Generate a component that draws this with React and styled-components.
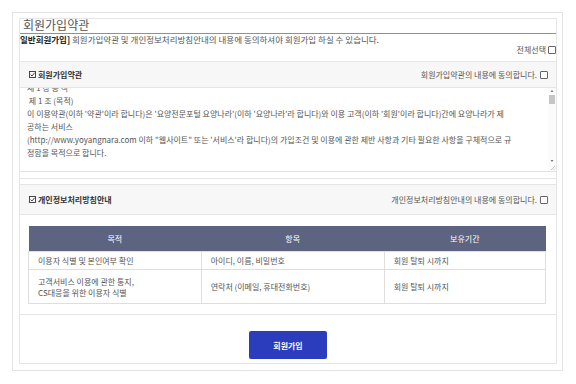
import React from "react";
import styled, { createGlobalStyle } from "styled-components";

const GlobalStyle = createGlobalStyle`
  html, body {
    margin: 0;
    padding: 0;
    background: #fff;
  }
  body {
    font-family: "Noto Sans CJK KR", "Noto Sans", sans-serif;
    color: #555;
  }
`;

const Page = styled.div`
  width: 576px;
  height: 384px;
  padding: 12px;
  box-sizing: border-box;
`;

const Card = styled.div`
  position: relative;
  width: 551px;
  height: 359px;
  box-sizing: border-box;
  border: 1px solid #e3e3e3;
  background: #fff;
  padding: 5px 5px 6px 6px;

  &::before {
    content: "";
    position: absolute;
    z-index: -1;
    left: 3px;
    bottom: 7px;
    width: 45%;
    height: 45%;
    box-shadow: -5px 9px 10px rgba(0, 0, 0, 0.3);
    transform: rotate(-2deg);
  }
`;

const Inner = styled.div`
  width: 538px;
  height: 346px;
  box-sizing: border-box;
  border: 1px solid #e6e6e6;
  display: flex;
  flex-direction: column;
`;

const Title = styled.h2`
  margin: 0;
  height: 14px;
  line-height: 12px;
  padding: 0 3px;
  font-size: 12px;
  font-weight: 400;
  color: #555;
  border-bottom: 1px solid #d46a9f;
`;

const Intro = styled.p`
  margin: 0;
  font-size: 8.5px;
  line-height: 11px;
  color: #555;
  white-space: nowrap;

  b {
    color: #222;
  }
`;

const SelectAll = styled.div`
  display: flex;
  justify-content: flex-end;
  align-items: center;
  font-size: 8px;
  line-height: 10px;
  color: #555;
  margin-bottom: 6px;
`;

const Box = styled.span`
  display: inline-block;
  width: 6px;
  height: 6px;
  border: 1px solid #666;
  border-radius: 1px;
  margin-left: ${(p) => p.$gap || 2}px;
  background: #fff;
`;

const Section = styled.div`
  border-top: 1px solid #e6e6e6;
  border-bottom: 1px solid #e6e6e6;
  padding-bottom: ${(p) => p.$pb || 0}px;
  margin-bottom: ${(p) => p.$mb || 0}px;
`;

const SectionHead = styled.div`
  height: ${(p) => p.$h || 25}px;
  background: #f7f7f7;
  border-bottom: 1px solid #e6e6e6;
  display: flex;
  align-items: center;
  justify-content: space-between;
  padding: 0 8px 0 9px;
`;

const HeadTitle = styled.span`
  display: flex;
  align-items: center;
  gap: 2px;
  font-size: 8px;
  font-weight: 700;
  color: #333;
`;

const Agree = styled.span`
  display: flex;
  align-items: center;
  font-size: 8px;
  color: #555;
`;

const TextArea = styled.div`
  height: 83px;
  display: flex;
  border-bottom: 1px solid #e3e3e3;
`;

const TextClip = styled.div`
  flex: 1;
  height: 76px;
  overflow: hidden;
  padding: 0 7px;
`;

const TextLines = styled.div`
  margin-top: -7px;
  font-size: 8px;
  line-height: 13px;
  color: #555;
  white-space: pre;
`;

const Scroll = styled.div`
  width: 8px;
  display: flex;
  flex-direction: column;
  align-items: center;
  background: #fbfbfb;
`;

const Thumb = styled.div`
  width: 6px;
  height: 9px;
  background: #c6c6c6;
  margin-top: 1px;
`;

const Spacer = styled.div`
  flex: 1;
`;

const TableWrap = styled.div`
  padding: 11px 10px 10px 8px;
`;

const Table = styled.table`
  width: 100%;
  table-layout: fixed;
  border-collapse: collapse;
  font-size: 8px;
  color: #555;

  th {
    background: #5d6481;
    color: #fff;
    font-weight: 400;
    height: 23px;
  }

  td {
    border: 1px solid #dedede;
    padding: 0 9px;
    line-height: 11px;
  }
`;

const Col = styled.col`
  width: ${(p) => p.$w}%;
`;

const Row = styled.tr`
  height: ${(p) => p.$h}px;
`;

const ButtonArea = styled.div`
  flex: 1;
  display: flex;
  justify-content: center;
  padding-top: 16px;
`;

const JoinButton = styled.button`
  width: 78px;
  height: 28px;
  border: none;
  border-radius: 2px;
  background: #2b3dbd;
  color: #fff;
  font-family: inherit;
  font-size: 8px;
  font-weight: 700;
  cursor: pointer;
`;

const CheckIcon = () => (
  <svg width="7" height="7" viewBox="0 0 7 7">
    <rect x="0.5" y="0.5" width="6" height="6" fill="none" stroke="#333" strokeWidth="0.9" />
    <path d="M1.6 3.6 L3 5 L5.6 1.8" fill="none" stroke="#333" strokeWidth="0.9" />
  </svg>
);

const Arrow = ({ up }) => (
  <svg width="6" height="6" viewBox="0 0 6 6">
    <path d={up ? "M1.5 4 L3 2 L4.5 4 Z" : "M1.5 2 L3 4 L4.5 2 Z"} fill="#777" />
  </svg>
);

const Grip = () => (
  <svg width="7" height="7" viewBox="0 0 7 7">
    <path d="M6 2 L2 6 M6 4.5 L4.5 6" stroke="#aaa" strokeWidth="0.7" />
  </svg>
);

const terms = [
  "제 1 장 총 칙",
  " 제 1 조 (목적)",
  "이 이용약관(이하 '약관'이라 합니다)은 '요양전문포털 요양나라'(이하 '요양나라'라 합니다)와 이용 고객(이하 '회원'이라 합니다)간에 요양나라가 제",
  "공하는 서비스",
  "(http://www.yoyangnara.com 이하 \"웹사이트\" 또는 '서비스'라 합니다)의 가입조건 및 이용에 관한 제반 사항과 기타 필요한 사항을 구체적으로 규",
  "정함을 목적으로 합니다.",
  "",
  " 제 2 조 (정의)",
];

const privacyRows = [
  { purpose: ["이용자 식별 및 본인여부 확인"], items: "아이디, 이름, 비밀번호", period: "회원 탈퇴 시까지", h: 18 },
  {
    purpose: ["고객서비스 이용에 관한 통지,", "CS대응을 위한 이용자 식별"],
    items: "연락처 (이메일, 휴대전화번호)",
    period: "회원 탈퇴 시까지",
    h: 34,
  },
];

export default function App() {
  return (
    <Page>
      <GlobalStyle />
      <Card>
        <Inner>
          <Title>회원가입약관</Title>
          <Intro>
            <b>일반회원가입]</b> 회원가입약관 및 개인정보처리방침안내의 내용에 동의하셔야 회원가입 하실 수 있습니다.
          </Intro>
          <SelectAll>
            전체선택
            <Box />
          </SelectAll>

          <Section $pb={6} $mb={5}>
            <SectionHead>
              <HeadTitle>
                <CheckIcon />
                회원가입약관
              </HeadTitle>
              <Agree>
                회원가입약관의 내용에 동의합니다.
                <Box $gap={3} />
              </Agree>
            </SectionHead>
            <TextArea>
              <TextClip>
                <TextLines>{terms.join("\n")}</TextLines>
              </TextClip>
              <Scroll>
                <Arrow up />
                <Thumb />
                <Spacer />
                <Arrow />
                <Grip />
              </Scroll>
            </TextArea>
          </Section>

          <Section>
            <SectionHead $h={29}>
              <HeadTitle>
                <CheckIcon />
                개인정보처리방침안내
              </HeadTitle>
              <Agree>
                개인정보처리방침안내의 내용에 동의합니다.
                <Box $gap={3} />
              </Agree>
            </SectionHead>
            <TableWrap>
              <Table>
                <colgroup>
                  <Col $w={33.4} />
                  <Col $w={35.4} />
                  <Col $w={31.2} />
                </colgroup>
                <thead>
                  <tr>
                    <th>목적</th>
                    <th>항목</th>
                    <th>보유기간</th>
                  </tr>
                </thead>
                <tbody>
                  {privacyRows.map((row, i) => (
                    <Row key={i} $h={row.h}>
                      <td>
                        {row.purpose.map((line, j) => (
                          <div key={j}>{line}</div>
                        ))}
                      </td>
                      <td>{row.items}</td>
                      <td>{row.period}</td>
                    </Row>
                  ))}
                </tbody>
              </Table>
            </TableWrap>
          </Section>

          <ButtonArea>
            <JoinButton>회원가입</JoinButton>
          </ButtonArea>
        </Inner>
      </Card>
    </Page>
  );
}
